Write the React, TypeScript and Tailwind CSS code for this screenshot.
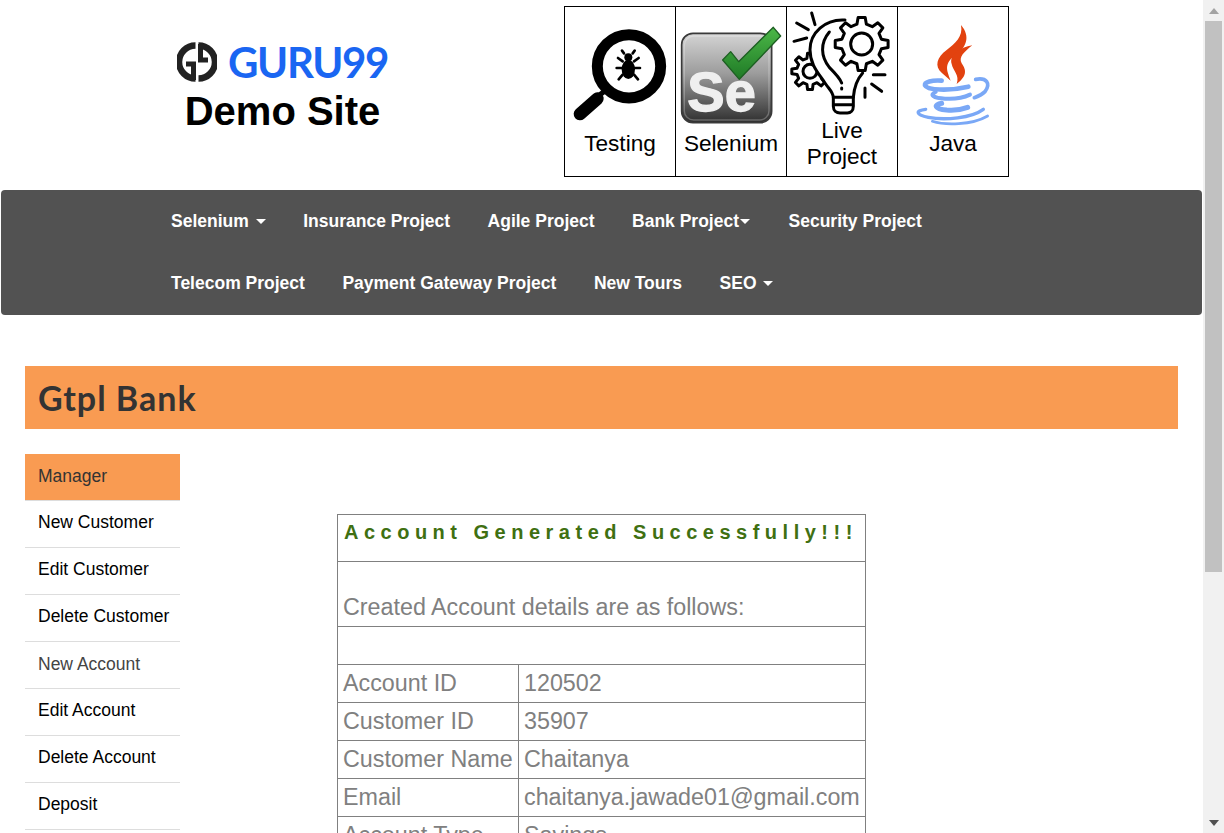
import React from "react";

const navRows = [
  [
    { label: "Selenium", caret: "space" },
    { label: "Insurance Project" },
    { label: "Agile Project" },
    { label: "Bank Project", caret: "tight" },
    { label: "Security Project" },
  ],
  [
    { label: "Telecom Project" },
    { label: "Payment Gateway Project" },
    { label: "New Tours" },
    { label: "SEO", caret: "space" },
  ],
];

const sideLinks = [
  { label: "New Customer" },
  { label: "Edit Customer" },
  { label: "Delete Customer" },
  { label: "New Account", muted: true },
  { label: "Edit Account" },
  { label: "Delete Account" },
  { label: "Deposit" },
];

const details = [
  ["Account ID", "120502"],
  ["Customer ID", "35907"],
  ["Customer Name", "Chaitanya"],
  ["Email", "chaitanya.jawade01@gmail.com"],
  ["Account Type", "Savings"],
];

function gearPath(cx: number, cy: number, outer: number, root: number, teeth: number) {
  const pts: string[] = [];
  const step = (Math.PI * 2) / teeth;
  for (let i = 0; i < teeth; i++) {
    const a = i * step;
    const corners = [
      [root, a - step * 0.3],
      [outer, a - step * 0.17],
      [outer, a + step * 0.17],
      [root, a + step * 0.3],
    ];
    corners.forEach(([r, t]) => {
      pts.push(`${(cx + r * Math.cos(t)).toFixed(1)} ${(cy + r * Math.sin(t)).toFixed(1)}`);
    });
  }
  return "M" + pts.join("L") + "Z";
}

function Logo() {
  return (
    <svg viewBox="0 0 40 40" className="w-[40px] h-[40px] shrink-0">
      {/* two mirrored G shapes */}
      <g fill="none" stroke="#222222">
        <path d="M18.500 3.500A16.500 16.500 0 0 0 18.500 36.500" strokeWidth="6.500" />
        <path d="M21.500 36.500A16.500 16.500 0 0 0 21.500 3.500" strokeWidth="6.500" />
        <path d="M16.500 38V22H9" strokeWidth="5" />
        <path d="M23.500 2V18H31" strokeWidth="5" />
      </g>
    </svg>
  );
}

function TestingIcon() {
  return (
    <svg viewBox="565 7 110 110" className="w-[110px] h-[110px] block overflow-visible">
      <g transform="translate(560 0) scale(0.3333)">
        <circle cx="207" cy="199" r="95" fill="none" stroke="#000000" strokeWidth="33" />
        <path d="M138 270L100 300" stroke="#000000" strokeWidth="16" />
        <path d="M112 296L60 342" stroke="#000000" strokeWidth="38" strokeLinecap="round" />
        <ellipse cx="205" cy="208" rx="20" ry="29" fill="#000000" />
        <circle cx="205" cy="172" r="12" fill="#000000" />
        <path
          d="M192 160L186 152M218 160L224 152M188 184L174 174M222 184L236 174M185 204L170 204M225 204L240 204M188 224L176 238M222 224L234 238"
          stroke="#000000"
          strokeWidth="8"
          strokeLinecap="round"
        />
      </g>
    </svg>
  );
}

function SeleniumIcon() {
  return (
    <svg viewBox="676 7 110 110" className="w-[110px] h-[110px] block overflow-visible">
      <defs>
        <linearGradient id="seBox" x1="0" y1="0" x2="0" y2="1">
          <stop offset="0" stopColor="#d4d4d4" />
          <stop offset="0.45" stopColor="#9c9c9c" />
          <stop offset="1" stopColor="#2f2f2f" />
        </linearGradient>
        <linearGradient id="seCheck" x1="0" y1="0" x2="0" y2="1">
          <stop offset="0" stopColor="#4cb848" />
          <stop offset="1" stopColor="#1f7a26" />
        </linearGradient>
      </defs>
      <g transform="translate(560 0) scale(0.3333)">
        <rect x="365" y="100" width="270" height="268" rx="34" fill="url(#seBox)" stroke="#3a3a3a" strokeWidth="5" />
        <rect x="373" y="108" width="254" height="252" rx="28" fill="none" stroke="#ffffff" strokeOpacity="0.25" strokeWidth="4" />
        <text
          x="382"
          y="334"
          fontSize="168"
          fontWeight="700"
          fill="#efefef"
          stroke="#efefef"
          strokeWidth="4"
          className="font-['Liberation_Sans',sans-serif]"
        >
          Se
        </text>
        <path
          d="M488 180L512 155L536 185L640 82L662 108L538 238Z"
          fill="url(#seCheck)"
          stroke="#1d5f22"
          strokeWidth="4"
          strokeLinejoin="round"
        />
      </g>
    </svg>
  );
}

function LiveIcon() {
  const line = { fill: "none", stroke: "#000000", strokeWidth: 9, strokeLinecap: "round", strokeLinejoin: "round" } as const;
  return (
    <svg viewBox="787 7 110 110" className="w-[110px] h-[110px] block overflow-visible">
      <g transform="translate(790 8) scale(0.3333)">
        <path d={gearPath(60, 190, 55, 40, 8)} {...line} fill="#ffffff" />
        <circle cx="60" cy="190" r="21" {...line} />
        <path
          d="M165 36C105 32 60 75 60 125C60 170 85 195 105 225C118 245 128 250 130 268H190C192 245 200 215 218 195L250 140L200 60Z"
          fill="#ffffff"
        />
        <path d="M165 36C105 32 60 75 60 125C60 170 85 195 105 225C118 245 128 250 130 268H190C192 245 200 215 218 195" {...line} />
        <path d="M118 72C90 105 92 145 118 178C135 195 150 210 155 225" {...line} />
        <path d="M155 240V243" {...line} />
        <path d="M130 268V295C130 308 140 315 150 315H172C182 315 190 308 190 295V268M130 290H190" {...line} />
        <path d={gearPath(215, 108, 80, 61, 8)} {...line} fill="#ffffff" />
        <circle cx="215" cy="108" r="33" {...line} />
        <path d="M65 15L75 50M20 45L55 65M12 100L50 90M250 200H285M245 228L275 250M225 240V268" {...line} />
      </g>
    </svg>
  );
}

function JavaIcon() {
  const blue = { fill: "none", stroke: "#7aa8f6", strokeLinecap: "round" } as const;
  return (
    <svg viewBox="898 7 110 110" className="w-[110px] h-[110px] block overflow-visible">
      <g transform="translate(905 20) scale(0.3333)">
        <path d="M168 15C175 50 150 70 125 90C95 112 88 140 110 158L137 182C128 155 115 135 145 110C185 85 198 50 168 15Z" fill="#e2420f" />
        <path d="M202 76C165 82 132 105 140 132C144 152 165 165 155 192C192 165 180 145 170 130C160 112 178 95 202 76Z" fill="#e2420f" />
        <path d="M110 182C80 180 58 186 60 196C66 210 130 214 190 200" {...blue} strokeWidth="14" />
        <path d="M92 216C72 224 85 235 120 236C150 238 178 232 195 224" {...blue} strokeWidth="12" />
        <path d="M110 250C85 254 88 266 125 270C150 272 172 268 188 262" {...blue} strokeWidth="15" />
        <path d="M62 268C30 272 32 284 70 292C120 302 200 294 235 268" {...blue} strokeWidth="10" />
        <path d="M82 304C120 316 200 316 248 288" {...blue} strokeWidth="8" />
        <path d="M212 178C245 172 258 190 240 215C230 225 218 230 208 233" {...blue} strokeWidth="11" />
      </g>
    </svg>
  );
}

function Caret({ tight }: { tight?: boolean }) {
  return (
    <span
      className={
        "inline-block align-middle w-0 h-0 border-x-[5px] border-x-transparent border-t-[5px] border-t-white " +
        (tight ? "ml-[1px] mr-[1px]" : "ml-[2px]")
      }
    />
  );
}

function Scrollbar() {
  return (
    <div className="w-[21px] h-full bg-[#f1f1f1] flex flex-col items-center shrink-0">
      <div className="h-[21px] flex items-center justify-center">
        <svg viewBox="0 0 10 6" className="w-[10px] h-[6px]">
          <path d="M5 0L10 6H0Z" fill="#a3a3a3" />
        </svg>
      </div>
      <div className="w-[17px] h-[551px] bg-[#c1c1c1]" />
      <div className="flex-1" />
      <div className="h-[21px] flex items-center justify-center">
        <svg viewBox="0 0 10 6" className="w-[10px] h-[6px]">
          <path d="M5 6L10 0H0Z" fill="#505050" />
        </svg>
      </div>
    </div>
  );
}

export default function App() {
  return (
    <div className="flex h-[833px] overflow-hidden bg-white font-['Liberation_Sans',Arial,sans-serif]">
      <div className="w-[1203px] shrink-0">
        {/* header */}
        <div className="flex h-[190px] pt-[6px]">
          <div className="w-[564px] shrink-0 pl-[177px] pt-[36px]">
            <div className="flex items-center gap-[11px] h-[40px]">
              <Logo />
              <span className="font-['Lato',sans-serif] font-bold text-[42px] tracking-[-1.4px] leading-none text-[#1a66f2]">GURU99</span>
            </div>
            <div className="w-[211px] text-center text-[40px] font-bold leading-[46px] text-black mt-[6px]">Demo Site</div>
          </div>
          <table className="border-collapse h-[171px] self-start">
            <tbody>
              <tr>
                {[
                  { icon: <TestingIcon />, label: "Testing" },
                  { icon: <SeleniumIcon />, label: "Selenium" },
                  { icon: <LiveIcon />, label: "Live Project" },
                  { icon: <JavaIcon />, label: "Java" },
                ].map((c) => (
                  <td key={c.label} className="border border-black p-0 w-[111px] align-top">
                    {c.icon}
                    <div className="h-[59px] pb-[5px] flex items-center justify-center text-center text-[22.6px] leading-[26px] text-black">
                      <span className="w-[96px]">{c.label}</span>
                    </div>
                  </td>
                ))}
              </tr>
            </tbody>
          </table>
        </div>

        {/* navbar */}
        <div className="mx-[1px] w-[1201px] h-[125px] bg-[#525252] rounded-[4px] pl-[155px]">
          {navRows.map((row, i) => (
            <div key={i} className="flex gap-x-[7.5px] h-[62px]">
              {row.map((item) => (
                <a key={item.label} className="px-[15px] flex items-center text-[17.5px] font-bold text-white whitespace-pre">
                  {item.label}
                  {item.caret === "space" ? " " : ""}
                  {item.caret ? <Caret tight={item.caret === "tight"} /> : null}
                </a>
              ))}
            </div>
          ))}
        </div>

        {/* bank title */}
        <div className="mx-[25px] mt-[51px] w-[1153px] h-[63px] bg-[#f99b52] pl-[13px] flex items-center font-['Lato',sans-serif] font-bold text-[34px] tracking-[1px] text-[#333333]">
          Gtpl Bank
        </div>

        <div className="flex mt-[25px] ml-[25px]">
          {/* sidebar */}
          <div className="w-[155px] shrink-0">
            <div className="h-[46px] bg-[#f99b52] pl-[13px] flex items-center text-[17.5px] text-[#333333] border-b border-transparent">Manager</div>
            <div className="h-px bg-[#dddddd]" />
            {sideLinks.map((l) => (
              <div
                key={l.label}
                className={
                  "h-[47px] pl-[13px] flex items-center text-[17.5px] border-b border-[#dddddd] " +
                  (l.muted ? "text-[#444444] pb-[1px]" : "text-black pb-[3px]")
                }
              >
                {l.label}
              </div>
            ))}
          </div>

          {/* account details */}
          <div className="ml-[157px] mt-[60px]">
            <table className="border-collapse table-fixed w-[528px] text-[23.3px] leading-[27px] text-[#808080]">
              <colgroup>
                <col className="w-[181px]" />
                <col className="w-[347px]" />
              </colgroup>
              <tbody>
                <tr>
                  <td colSpan={2} className="border border-[#808080] px-[6px] h-[47px] align-top pt-[3px]">
                    <span className="text-[20px] font-bold text-[#3f7012] tracking-[5.5px] whitespace-nowrap">Account Generated Successfully!!!</span>
                  </td>
                </tr>
                <tr>
                  <td colSpan={2} className="border border-[#808080] px-[5px] h-[65px] align-bottom pb-[5px]">
                    Created Account details are as follows:
                  </td>
                </tr>
                <tr>
                  <td colSpan={2} className="border border-[#808080] h-[38px]" />
                </tr>
                {details.map(([k, v]) => (
                  <tr key={k}>
                    <td className="border border-[#808080] px-[5px] h-[38px] whitespace-nowrap">{k}</td>
                    <td className="border border-[#808080] px-[5px] h-[38px]">{v}</td>
                  </tr>
                ))}
              </tbody>
            </table>
          </div>
        </div>
      </div>
      <Scrollbar />
    </div>
  );
}
